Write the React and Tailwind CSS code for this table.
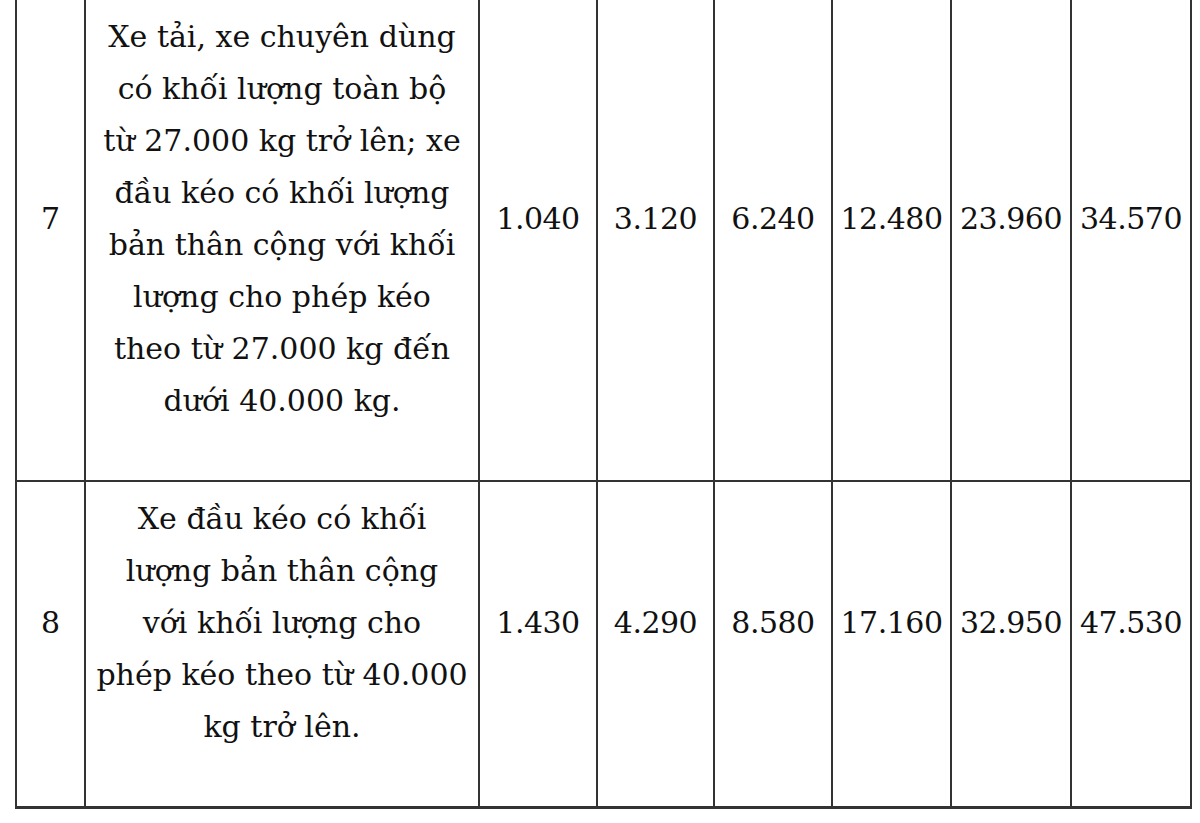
import React from "react";

const rows = [
  {
    no: "7",
    lines: [
      "Xe tải, xe chuyên dùng",
      "có khối lượng toàn bộ",
      "từ 27.000 kg trở lên; xe",
      "đầu kéo có khối lượng",
      "bản thân cộng với khối",
      "lượng cho phép kéo",
      "theo từ 27.000 kg đến",
      "dưới 40.000 kg.",
    ],
    vals: ["1.040", "3.120", "6.240", "12.480", "23.960", "34.570"],
    h: "h-[482px]",
  },
  {
    no: "8",
    lines: [
      "Xe đầu kéo có khối",
      "lượng bản thân cộng",
      "với khối lượng cho",
      "phép kéo theo từ 40.000",
      "kg trở lên.",
    ],
    vals: ["1.430", "4.290", "8.580", "17.160", "32.950", "47.530"],
    h: "h-[326px]",
  },
];

export default function App() {
  return (
    <div className="w-[1200px] h-[823px] bg-white overflow-hidden pl-[15px] pr-[10px]">
      <table
        className="table-fixed border-collapse text-[#111] text-[30px] leading-[52px] w-[1175px] -mt-[2px] border-b-[3px] border-b-[#333]"
        style={{ fontFamily: '"DejaVu Serif", "Liberation Serif", serif' }}
      >
        <colgroup>
          <col className="w-[69px]" />
          <col className="w-[394px]" />
          <col className="w-[118px]" />
          <col className="w-[117px]" />
          <col className="w-[118px]" />
          <col className="w-[119px]" />
          <col className="w-[120px]" />
          <col className="w-[120px]" />
        </colgroup>
        <tbody>
          {rows.map((r) => (
            <tr key={r.no} className={r.h}>
              <td className="border-2 border-[#333] text-center align-middle p-0">
                <div className="pb-[42px]">{r.no}</div>
              </td>
              <td className="border-2 border-[#333] text-center align-middle p-0">
                <div className="pb-[42px] whitespace-nowrap">
                  {r.lines.map((l, i) => (
                    <div key={i}>{l}</div>
                  ))}
                </div>
              </td>
              {r.vals.map((v, i) => (
                <td
                  key={i}
                  className="border-2 border-[#333] text-center align-middle p-0 whitespace-nowrap tracking-[-0.5px]"
                >
                  <div className="pb-[42px]">{v}</div>
                </td>
              ))}
            </tr>
          ))}
        </tbody>
      </table>
    </div>
  );
}
